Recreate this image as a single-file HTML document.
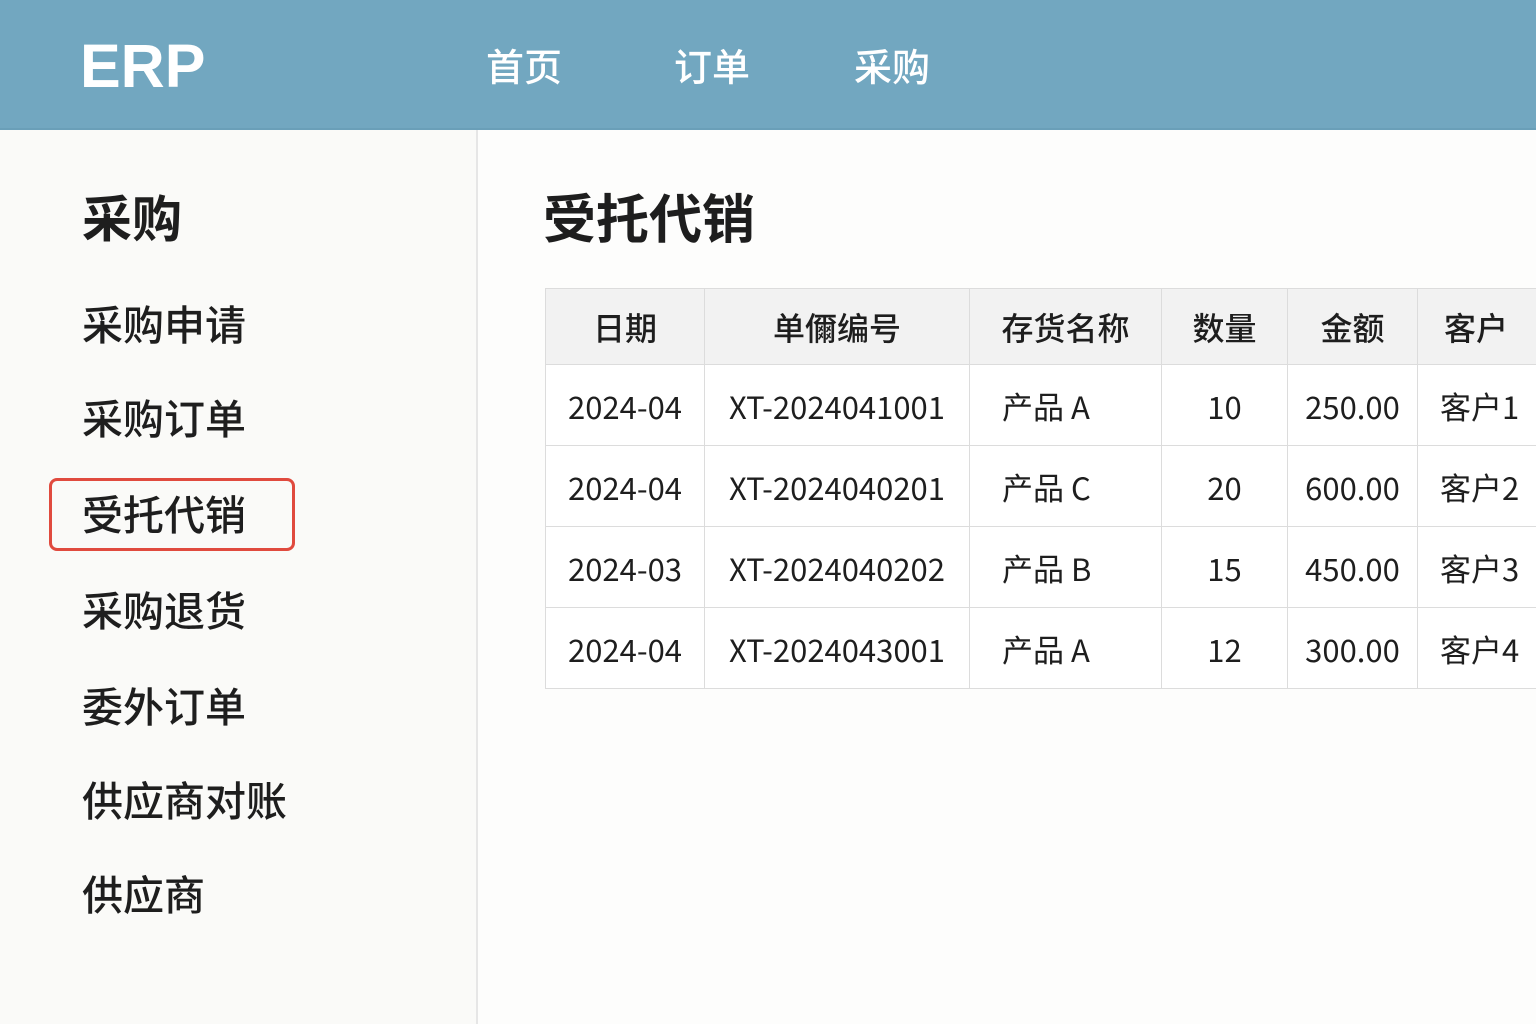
<!DOCTYPE html>
<html><head><meta charset="utf-8"><style>
*{margin:0;padding:0;box-sizing:border-box}
body{width:1536px;height:1024px;overflow:hidden;background:#fdfdfc;font-family:"Liberation Sans","Noto Sans CJK SC",sans-serif;color:#1e1e1e;position:relative}
.hdr{position:absolute;left:0;top:0;width:1536px;height:130px;background:#72a7c0;border-bottom:2px solid #6a9fb8}
.logo{position:absolute;left:80px;top:31px;font-size:61px;font-weight:bold;color:#fff}
.nav{position:absolute;top:37px;font-size:38px;color:#fff;font-family:"Noto Sans CJK SC",sans-serif;font-weight:500}
.side{position:absolute;left:0;top:130px;width:478px;height:894px;background:#fafaf8;border-right:2px solid #e6e6e6}
.st{position:absolute;left:82px;top:180px;font-size:50px;font-weight:bold;font-family:"Noto Sans CJK SC",sans-serif}
.mi{position:absolute;left:82px;font-size:41px;font-family:"Noto Sans CJK SC",sans-serif;font-weight:500}
.sel{position:absolute;left:49px;top:478px;width:246px;height:73px;border:3px solid #e04a3e;border-radius:8px}
.title{position:absolute;left:543px;top:178px;font-size:53px;font-weight:bold;font-family:"Noto Sans CJK SC",sans-serif}
table{position:absolute;left:545px;top:288px;width:1002px;table-layout:fixed;border-collapse:collapse;font-size:31px;font-family:"Noto Sans CJK SC",sans-serif;background:#fff}
td,th{border:1.5px solid #dcdcdc;text-align:center;white-space:nowrap;overflow:hidden;padding:0}
th{background:#f2f2f2;font-weight:500;height:76px;font-size:32px}
td{height:81px;font-weight:400}
td.l{text-align:left;padding-left:32px}
</style></head><body>
<div class="hdr">
<div class="logo">ERP</div>
<div class="nav" style="left:486px">首页</div>
<div class="nav" style="left:674px">订单</div>
<div class="nav" style="left:854px">采购</div>
</div>
<div class="side"></div>
<div class="st">采购</div>
<div class="mi" style="top:292px">采购申请</div>
<div class="mi" style="top:386px">采购订单</div>
<div class="sel"></div>
<div class="mi" style="top:482px">受托代销</div>
<div class="mi" style="top:578px">采购退货</div>
<div class="mi" style="top:674px">委外订单</div>
<div class="mi" style="top:768px">供应商对账</div>
<div class="mi" style="top:862px">供应商</div>
<div class="title">受托代销</div>
<table>
<colgroup><col style="width:159px"><col style="width:265px"><col style="width:192px"><col style="width:126px"><col style="width:130px"><col style="width:130px"></colgroup>
<tr><th>日期</th><th>单儞编号</th><th>存货名称</th><th>数量</th><th>金额</th><th style="text-align:left;padding-left:26px">客户</th></tr>
<tr><td>2024-04</td><td>XT-2024041001</td><td class="l">产品 A</td><td>10</td><td>250.00</td><td class="l" style="padding-left:22px">客户1</td></tr>
<tr><td>2024-04</td><td>XT-2024040201</td><td class="l">产品 C</td><td>20</td><td>600.00</td><td class="l" style="padding-left:22px">客户2</td></tr>
<tr><td>2024-03</td><td>XT-2024040202</td><td class="l">产品 B</td><td>15</td><td>450.00</td><td class="l" style="padding-left:22px">客户3</td></tr>
<tr><td>2024-04</td><td>XT-2024043001</td><td class="l">产品 A</td><td>12</td><td>300.00</td><td class="l" style="padding-left:22px">客户4</td></tr>
</table>
</body></html>
